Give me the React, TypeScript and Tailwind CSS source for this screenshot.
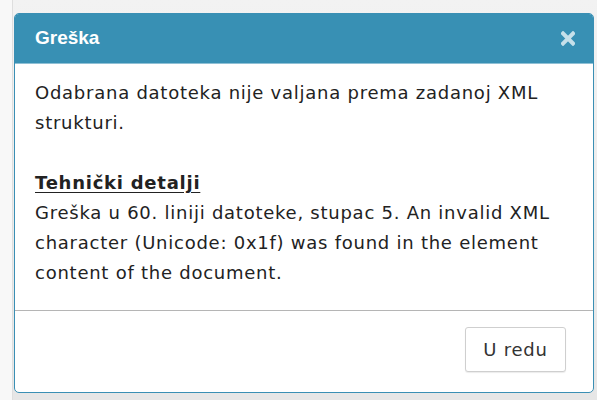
import React from 'react';

const bodyFont = { fontFamily: '"DejaVu Sans", Verdana, sans-serif' };
const titleFont = { fontFamily: '"Liberation Sans", Arial, sans-serif' };

const CloseIcon: React.FC = () => (
  <svg width="14" height="15" viewBox="0 0 14 15" className="block">
    <path d="M2 2.5 L12 12.5 M12 2.5 L2 12.5" stroke="#c6e0ea" strokeWidth="4" strokeLinecap="square" />
  </svg>
);

const App: React.FC = () => {
  return (
    <div className="w-[597px] h-[400px] flex overflow-hidden bg-[#e7e7e7]">
      <div className="w-[13px] h-full bg-[#f8f8f8] border-r border-[#dedede]" />
      <div className="flex-1 flex flex-col bg-gradient-to-b from-[#f2f2f2] to-[#e6e6e6] pt-[13px] pl-[1px]">
        <div className="w-[580px] h-[380px] flex flex-col bg-white border border-[#3a8fb4] rounded-[5px] overflow-hidden">
          <div className="h-[50px] shrink-0 flex items-center justify-between bg-[#3890b4] border-b border-[#8fc0d5] pl-[20px] pr-[18px]">
            <span className="text-white font-bold text-[19px]" style={titleFont}>
              Greška
            </span>
            <button className="p-0">
              <CloseIcon />
            </button>
          </div>
          <div
            className="flex-1 px-[20px] pt-[14px] text-[18px] leading-[30px] tracking-[0.75px] text-[#222]"
            style={bodyFont}
          >
            <p>Odabrana datoteka nije valjana prema zadanoj XML strukturi.</p>
            <p className="mt-[30px] font-bold underline underline-offset-[3px]">Tehnički detalji</p>
            <p>
              Greška u 60. liniji datoteke, stupac 5. An invalid XML character (Unicode: 0x1f) was found in the
              element content of the document.
            </p>
          </div>
          <div className="h-[82px] shrink-0 border-t border-[#b5b5b5] flex items-start justify-end pt-[16px] pr-[27px]">
            <button
              className="w-[101px] h-[45px] bg-white border border-[#cfcfcf] rounded-[3px] shadow-[0_1px_1px_rgba(0,0,0,0.08)] text-[18px] tracking-[0.75px] text-[#333]"
              style={bodyFont}
            >
              U redu
            </button>
          </div>
        </div>
      </div>
    </div>
  );
};

export default App;
